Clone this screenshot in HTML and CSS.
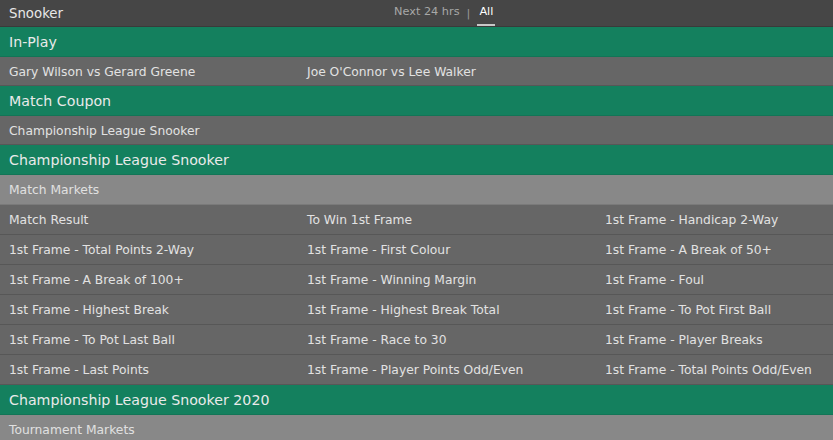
FILE: index.html
```html
<!DOCTYPE html>
<html>
<head>
<meta charset="utf-8">
<link rel="stylesheet" href="styles.css">
</head>
<body>
<div class="page">
  <div class="topbar">
    <div class="title">Snooker</div>
    <div class="tabs">
      <span class="tab">Next 24 hrs</span>
      <span class="sep">|</span>
      <span class="tab active">All</span>
    </div>
  </div>

  <div class="section-head">In-Play</div>
  <div class="grid inplay">
    <div class="cell">Gary Wilson vs Gerard Greene</div>
    <div class="cell">Joe O'Connor vs Lee Walker</div>
    <div class="cell"></div>
  </div>

  <div class="section-head">Match Coupon</div>
  <div class="row">Championship League Snooker</div>

  <div class="section-head">Championship League Snooker</div>
  <div class="sub-head">Match Markets</div>
  <div class="grid">
    <div class="cell">Match Result</div>
    <div class="cell">To Win 1st Frame</div>
    <div class="cell">1st Frame - Handicap 2-Way</div>
    <div class="cell">1st Frame - Total Points 2-Way</div>
    <div class="cell">1st Frame - First Colour</div>
    <div class="cell">1st Frame - A Break of 50+</div>
    <div class="cell">1st Frame - A Break of 100+</div>
    <div class="cell">1st Frame - Winning Margin</div>
    <div class="cell">1st Frame - Foul</div>
    <div class="cell">1st Frame - Highest Break</div>
    <div class="cell">1st Frame - Highest Break Total</div>
    <div class="cell">1st Frame - To Pot First Ball</div>
    <div class="cell">1st Frame - To Pot Last Ball</div>
    <div class="cell">1st Frame - Race to 30</div>
    <div class="cell">1st Frame - Player Breaks</div>
    <div class="cell">1st Frame - Last Points</div>
    <div class="cell">1st Frame - Player Points Odd/Even</div>
    <div class="cell">1st Frame - Total Points Odd/Even</div>
  </div>

  <div class="section-head">Championship League Snooker 2020</div>
  <div class="sub-head">Tournament Markets</div>
</div>
</body>
</html>
```

FILE: styles.css
```css
html, body {
  margin: 0;
  padding: 0;
  background: #666666;
}
.page {
  font-family: "DejaVu Sans", "Liberation Sans", sans-serif;
  font-size: 12.3px;
  color: #e2e2e2;
  overflow: hidden;
  height: 440px;
}
.topbar {
  display: flex;
  align-items: center;
  height: 26px;
  background: #464646;
  border-bottom: 1px solid #3a3a3a;
  padding-left: 9px;
  position: relative;
}
.title {
  font-size: 13.3px;
  color: #e8e8e8;
}
.tabs {
  position: absolute;
  left: 394px;
  top: 0;
  height: 26px;
  display: flex;
  align-items: center;
  gap: 7px;
  font-size: 11.3px;
}
.tab {
  color: #a8a8a8;
  height: 26px;
  line-height: 24px;
  box-sizing: border-box;
}
.tab.active {
  color: #ffffff;
  border-bottom: 2px solid #c8c8c8;
  padding: 0 2px;
}
.sep {
  color: #9a9a9a;
}
.section-head {
  height: 27px;
  padding-top: 2px;
  line-height: 27px;
  background: #14805e;
  color: #eaeaea;
  font-size: 14.2px;
  padding-left: 9px;
  border-bottom: 1px solid #127556;
}
.sub-head {
  height: 27px;
  padding-top: 2px;
  line-height: 27px;
  background: #888888;
  color: #e0e0e0;
  padding-left: 9px;
  border-bottom: 1px solid #7a7a7a;
}
.row {
  height: 26px;
  padding-top: 2px;
  line-height: 26px;
  background: #666666;
  padding-left: 9px;
  border-bottom: 1px solid #575757;
}
.grid {
  display: grid;
  grid-template-columns: 298px 298px 1fr;
  background: #666666;
}
.cell {
  height: 27px;
  padding-top: 2px;
  line-height: 27px;
  padding-left: 9px;
  border-bottom: 1px solid #575757;
  white-space: nowrap;
}
.inplay .cell {
  height: 26px;
  line-height: 26px;
}
```
